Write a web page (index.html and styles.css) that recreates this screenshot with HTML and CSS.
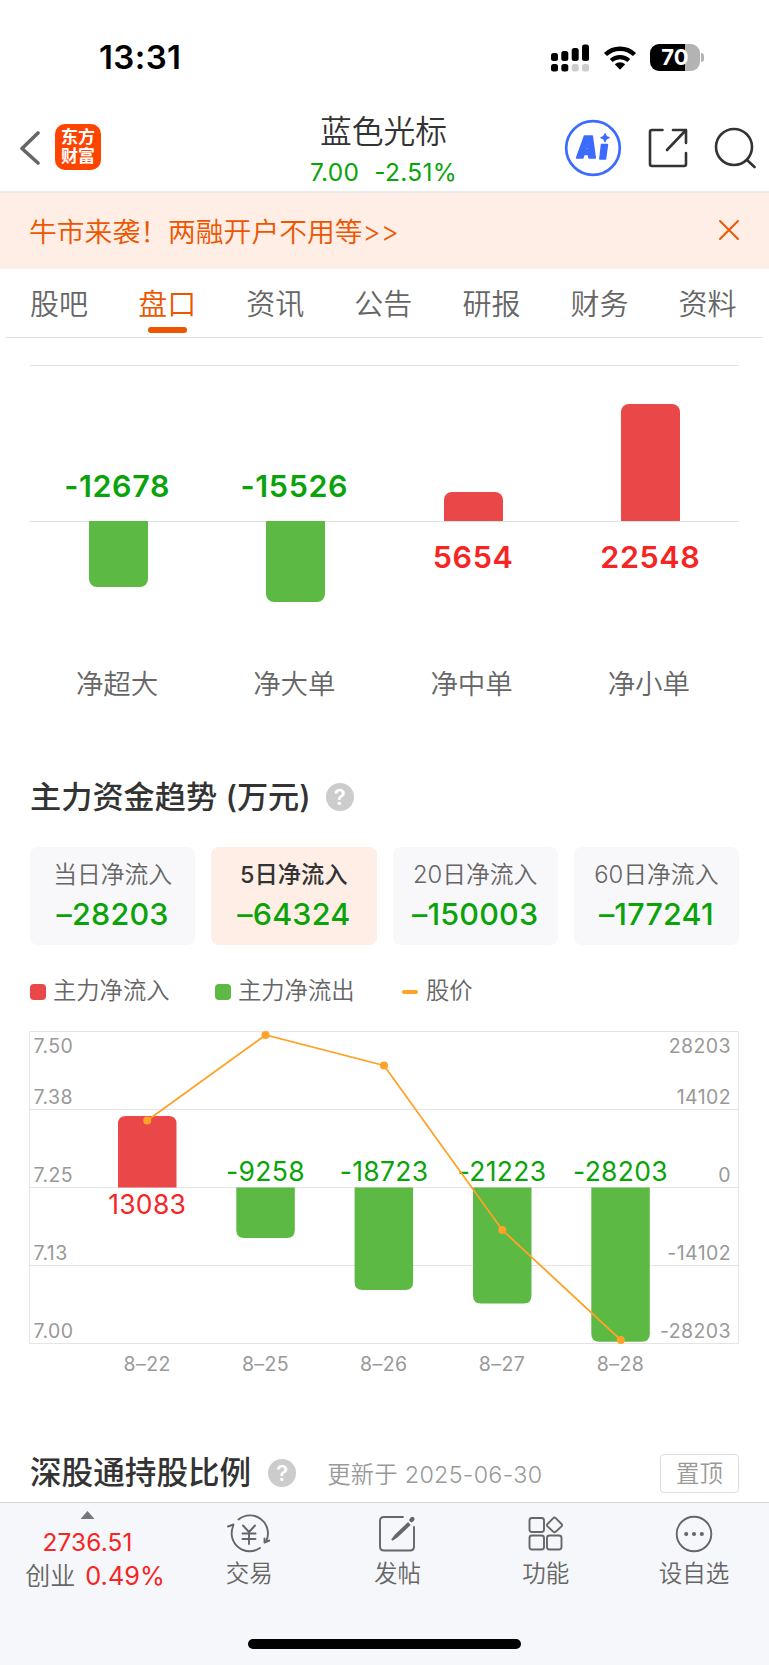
FILE: index.html
```html
<!DOCTYPE html>
<html lang="zh-CN">
<head>
  <meta charset="UTF-8">
  <title>蓝色光标</title>
  <link rel="stylesheet" href="styles.css">
</head>
<body>

  <div class="status-bar">
    <div class="time">13:31</div>
    <svg class="signal" width="38" height="28" viewBox="0 0 38 28">
      <rect x="0" y="9" width="7" height="8" rx="2.5"/>
      <rect x="10.3" y="7" width="7" height="10" rx="2.5"/>
      <rect x="20.7" y="4" width="7" height="13" rx="2.5"/>
      <rect x="31" y="0.5" width="7" height="16.5" rx="2.5"/>
      <rect x="0" y="20" width="7" height="7.5" rx="2.5"/>
      <rect x="10.3" y="20" width="7" height="7.5" rx="2.5"/>
      <rect x="20.7" y="20" width="7" height="7.5" rx="2.5" fill="#ccc"/>
      <rect x="31" y="20" width="7" height="7.5" rx="2.5" fill="#ccc"/>
    </svg>
    <svg class="wifi" width="34" height="26" viewBox="0 0 34 26">
      <path d="M2.5 9.5a21 21 0 0 1 29 0" fill="none" stroke="#000" stroke-width="4.4"/>
      <path d="M8.2 15.5a13 13 0 0 1 17.6 0" fill="none" stroke="#000" stroke-width="4.2"/>
      <path d="M11.8 19.2a8 8 0 0 1 10.4 0L17 24.8z"/>
    </svg>
    <div class="battery">70</div>
    <div class="battery-tip"></div>
  </div>

  <div class="header">
    <div class="header-left">
      <svg width="20" height="36" viewBox="0 0 20 36" fill="none" stroke="#666" stroke-width="3.6" stroke-linecap="round" stroke-linejoin="round">
        <path d="M18 3L2 18.5L18 33"/>
      </svg>
      <div class="logo">东方<br>财富</div>
    </div>
    <div class="stock">
      <div class="stock-name">蓝色光标</div>
      <div class="stock-price"><span>7.00</span><span>-2.51%</span></div>
    </div>
    <div class="header-right">
      <svg width="58" height="58" viewBox="0 0 58 58">
        <circle cx="29" cy="29" r="26.8" fill="none" stroke="#3b6bff" stroke-width="2.7"/>
        <g fill="#3b6bff" stroke="#3b6bff" stroke-width="1.5" stroke-linejoin="round">
          <path fill-rule="evenodd" d="M12.5 39L20.5 17H28.3L31.3 39H25L24.5 35.5H20L18.8 39ZM21.5 30.5H24.3L24 25Z"/>
          <path d="M37.5 25.5H43.5L41.5 40H35.8Z"/>
          <path d="M41 15L42.3 17.6L45 18.6L42.3 19.7L41 22.4L39.7 19.7L37 18.6L39.7 17.6Z"/>
        </g>
      </svg>
      <svg width="40" height="40" viewBox="0 0 40 40" fill="none" stroke="#333" stroke-width="2.6" stroke-linecap="round" stroke-linejoin="round">
        <path d="M14.5 2H4Q2 2 2 4V36Q2 38 4 38H36Q38 38 38 36V25"/>
        <path d="M25 2H38V15M38 2L19 22"/>
      </svg>
      <svg width="42" height="42" viewBox="0 0 42 42" fill="none" stroke="#333" stroke-width="2.6" stroke-linecap="round">
        <circle cx="20" cy="20" r="18"/>
        <path d="M33 33L40.5 40"/>
      </svg>
    </div>
  </div>

  <div class="notice">
    <span>牛市来袭！两融开户不用等&gt;&gt;</span>
    <svg width="20" height="20" viewBox="0 0 20 20" stroke="#ee5500" stroke-width="1.9" stroke-linecap="round">
      <path d="M1 1L19 19M19 1L1 19"/>
    </svg>
  </div>

  <div class="tabs">
    <div class="tab">股吧</div>
    <div class="tab active">盘口</div>
    <div class="tab">资讯</div>
    <div class="tab">公告</div>
    <div class="tab">研报</div>
    <div class="tab">财务</div>
    <div class="tab">资料</div>
  </div>

  <!-- 净单柱状图 -->
  <div class="order-chart">
    <div class="order-col">
      <div class="above"><span class="value green">-12678</span></div>
      <div class="below"><div class="bar bar-down" style="height: 66px"></div></div>
      <div class="order-name">净超大</div>
    </div>
    <div class="order-col">
      <div class="above"><span class="value green">-15526</span></div>
      <div class="below"><div class="bar bar-down" style="height: 81px"></div></div>
      <div class="order-name">净大单</div>
    </div>
    <div class="order-col">
      <div class="above"><div class="bar bar-up" style="height: 29px"></div></div>
      <div class="below"><span class="value red">5654</span></div>
      <div class="order-name">净中单</div>
    </div>
    <div class="order-col">
      <div class="above"><div class="bar bar-up" style="height: 117px"></div></div>
      <div class="below"><span class="value red">22548</span></div>
      <div class="order-name">净小单</div>
    </div>
  </div>

  <!-- 主力资金趋势 -->
  <div class="section-title trend-title">
    <h2>主力资金趋势 (万元)</h2>
    <span class="help">?</span>
  </div>

  <div class="cards">
    <div class="card">
      <div class="card-name">当日净流入</div>
      <div class="card-value">–28203</div>
    </div>
    <div class="card selected">
      <div class="card-name">5日净流入</div>
      <div class="card-value">–64324</div>
    </div>
    <div class="card">
      <div class="card-name">20日净流入</div>
      <div class="card-value">–150003</div>
    </div>
    <div class="card">
      <div class="card-name">60日净流入</div>
      <div class="card-value">–177241</div>
    </div>
  </div>

  <div class="legend">
    <div class="legend-item legend-in"><i class="dot dot-red"></i>主力净流入</div>
    <div class="legend-item legend-out"><i class="dot dot-green"></i>主力净流出</div>
    <div class="legend-item"><i class="dash"></i>股价</div>
  </div>

  <svg class="trend-chart" width="769" height="350" viewBox="0 1030 769 350">
    <g class="grid">
      <rect x="29.5" y="1031.5" width="709" height="312"/>
      <path d="M30 1109.5H739M30 1187.5H739M30 1265.5H739"/>
    </g>
    <path class="fill-red" d="M118 1187.5V1124Q118 1116 126 1116H168.5Q176.5 1116 176.5 1124V1187.5Z"/>
    <g class="fill-green">
      <path d="M236.3 1187.5V1230Q236.3 1238 244.3 1238H286.8Q294.8 1238 294.8 1230V1187.5Z"/>
      <path d="M354.6 1187.5V1282Q354.6 1290 362.6 1290H405.1Q413.1 1290 413.1 1282V1187.5Z"/>
      <path d="M473 1187.5V1295.5Q473 1303.5 481 1303.5H523.5Q531.5 1303.5 531.5 1295.5V1187.5Z"/>
      <path d="M591.3 1187.5V1333.8Q591.3 1341.8 599.3 1341.8H641.8Q649.8 1341.8 649.8 1333.8V1187.5Z"/>
    </g>
    <g class="axis">
      <text x="33.500" y="1052.500">7.50</text>
      <text x="33.500" y="1103.500">7.38</text>
      <text x="33.500" y="1181.500">7.25</text>
      <text x="33.500" y="1259.500">7.13</text>
      <text x="33.500" y="1337.500">7.00</text>
    </g>
    <g class="axis axis-right">
      <text x="731" y="1052.500">28203</text>
      <text x="731" y="1103.500">14102</text>
      <text x="731" y="1181.500">0</text>
      <text x="731" y="1259.500">-14102</text>
      <text x="731" y="1337.500">-28203</text>
    </g>
    <g class="bar-label">
      <text class="red" x="147.2" y="1213.5">13083</text>
      <text x="265.5" y="1181">-9258</text>
      <text x="384" y="1181">-18723</text>
      <text x="502" y="1181">-21223</text>
      <text x="620.5" y="1181">-28203</text>
    </g>
    <g class="axis axis-date">
      <text x="147.2" y="1370.5">8–22</text>
      <text x="265.5" y="1370.5">8–25</text>
      <text x="383.8" y="1370.5">8–26</text>
      <text x="502" y="1370.5">8–27</text>
      <text x="620.5" y="1370.5">8–28</text>
    </g>
    <polyline class="price-line" points="147.2,1120.5 265.5,1035 384,1065.5 502.3,1230 620.8,1340"/>
    <g class="price-dot">
      <circle cx="147.2" cy="1120.5" r="4"/>
      <circle cx="265.5" cy="1035" r="4"/>
      <circle cx="384" cy="1065.5" r="4"/>
      <circle cx="502.3" cy="1230" r="4"/>
      <circle cx="620.8" cy="1340" r="4"/>
    </g>
  </svg>

  <!-- 深股通持股比例 -->
  <div class="section-title holding-title">
    <h2>深股通持股比例</h2>
    <span class="help">?</span>
    <span class="update">更新于 2025-06-30</span>
    <span class="pin">置顶</span>
  </div>

  <div class="footer">
    <div class="nav">
      <div class="index">
        <div class="arrow"></div>
        <div class="index-value">2736.51</div>
        <div class="index-change">创业 <span>0.49%</span></div>
      </div>
      <div class="nav-item">
        <svg width="44" height="40" viewBox="0 0 44 40" fill="none" stroke="#666" stroke-width="1.9" stroke-linecap="round" stroke-linejoin="round">
          <path d="M11.5 5.5A18 18 0 0 1 39.5 26.500M37.500 24.500V28.500L42.300 26.500"/>
          <path d="M1 12.5L6.5 10.5L5.8 13A18 18 0 0 0 33 34"/>
          <path d="M16 11.5L22 18L28 11.5M22 18V30M15.5 19.5H28.5M15.5 25H28.5"/>
        </svg>
        <div>交易</div>
      </div>
      <div class="nav-item">
        <svg width="40" height="40" viewBox="0 0 40 40" fill="none" stroke="#666" stroke-width="1.9" stroke-linecap="round">
          <path d="M26 3H7Q3 3 3 7V32.5Q3 36.5 7 36.5H33Q37 36.5 37 32.5V13"/>
          <path d="M31 9.500L18.5 21.5L15 26L19.8 22.8L32.300 11Z" fill="#666" stroke-width="2"/>
          <path d="M34.5 6L35.300 5.200" stroke-width="4.5"/>
        </svg>
        <div>发帖</div>
      </div>
      <div class="nav-item">
        <svg width="40" height="40" viewBox="0 0 40 40" fill="none" stroke="#666" stroke-width="1.9" stroke-linejoin="round">
          <rect x="3.5" y="4" width="14.5" height="14" rx="2.5"/>
          <rect x="3.5" y="21.5" width="14.5" height="14" rx="2.5"/>
          <rect x="21" y="21.5" width="14.5" height="14" rx="2.5"/>
          <path d="M27.3 4.2Q28.5 3 29.7 4.2L35.5 10Q36.7 11.2 35.5 12.4L29.7 17.7Q28.5 18.9 27.3 17.7L21.5 12.4Q20.3 11.2 21.5 10Z"/>
        </svg>
        <div>功能</div>
      </div>
      <div class="nav-item">
        <svg width="40" height="40" viewBox="0 0 40 40" fill="#666">
          <circle cx="20" cy="20" r="17.3" fill="none" stroke="#666" stroke-width="1.9"/>
          <circle cx="12.2" cy="20" r="2.1"/>
          <circle cx="20" cy="20" r="2.1"/>
          <circle cx="27.8" cy="20" r="2.1"/>
        </svg>
        <div>设自选</div>
      </div>
    </div>
    <div class="home-indicator"></div>
  </div>

</body>
</html>
```

FILE: styles.css
```css
* {
  box-sizing: border-box;
}

body {
  margin: 0;
  width: 769px;
  height: 1665px;
  overflow: hidden;
  background: #fff;
  color: #666;
  font-family: Inter, "Noto Sans CJK SC", sans-serif;
  font-weight: 350;
}

svg {
  display: block;
  flex: none;
}

.green { color: #0aa30a; fill: #0aa30a; }
.red { color: #f72424; fill: #f72424; }

/* 状态栏 */
.status-bar {
  display: flex;
  align-items: center;
  height: 97px;
  padding: 18px 65px 0 99px;
}

.time {
  color: #000;
  font-size: 33px;
  font-weight: 600;
  line-height: 38px;
  letter-spacing: 0.4px;
  padding-bottom: 2px;
  margin-right: auto;
}

.signal { margin-right: 14px; }
.wifi { margin-right: 13px; }

.battery {
  width: 50px;
  height: 27px;
  border-radius: 9px;
  background: linear-gradient(to right, #000 70%, #b3b3b3 70%);
  color: #fff;
  font-size: 22px;
  font-weight: 700;
  line-height: 27px;
  text-align: center;
}

.battery-tip {
  width: 3px;
  height: 9px;
  margin-left: 1px;
  border-radius: 0 3px 3px 0;
  background: #b3b3b3;
}

/* 顶部标题 */
.header {
  display: grid;
  grid-template-columns: 1fr 200px 1fr;
  height: 96px;
  border-bottom: 2px solid #ebebee;
}

.header-left,
.header-right {
  display: flex;
  align-items: center;
  padding-top: 7px;
  height: 94px;
}

.header-left { padding-left: 20px; }

.logo {
  width: 46px;
  height: 46px;
  margin-left: 15px;
  padding-top: 4px;
  margin-top: -2px;
  border-radius: 10px;
  background: #ff4400;
  color: #fff;
  font-size: 17px;
  font-weight: 700;
  line-height: 19px;
  text-align: center;
}

.stock {
  text-align: center;
  padding: 13px 2px 0 0;
}

.stock-name {
  color: #333;
  font-size: 31.8px;
  line-height: 43px;
}

.stock-price {
  display: flex;
  justify-content: center;
  gap: 15px;
  color: #0aa30a;
  font-size: 24.5px;
  font-weight: 400;
  line-height: 38px;
  letter-spacing: 0.3px;
}

.header-right {
  justify-content: flex-end;
  padding-right: 13px;
}

.header-right svg + svg { margin-left: 26px; }

/* 通知条 */
.notice {
  display: flex;
  align-items: center;
  justify-content: space-between;
  height: 76px;
  padding: 0 30px 2px 29px;
  background: #feeee6;
  color: #ee5500;
  font-size: 27.8px;
}

/* 导航标签 */
.tabs {
  display: flex;
  height: 69px;
  margin: 0 6px;
  border-bottom: 1px solid #e2e2e2;
}

.tab {
  display: flex;
  flex-direction: column;
  align-items: center;
  width: 108.1px;
  padding: 13px 2px 0 0;
  font-size: 29px;
  line-height: 46px;
}

.active {
  color: #ee5500;
}

.active::after {
  content: "";
  width: 39px;
  height: 6px;
  margin: -1px 0 0 1px;
  border-radius: 3px;
  background: #ee5500;
}

/* 净单柱状图 */
.order-chart {
  display: grid;
  grid-template-columns: repeat(4, 1fr);
  margin: 27px 30px 0;
  border-top: 1px solid #e2e2e2;
}

.above,
.below {
  display: flex;
  justify-content: center;
  height: 156px;
}

.above {
  align-items: flex-end;
  border-bottom: 1px solid #dfe4e3;
}

.below { height: 140px; margin-top: -1px; }

.above .value { margin: 0 3px 17px 0; }
.below .value { margin-top: 18px; }

.value {
  font-size: 30.5px;
  font-weight: 600;
  line-height: 36px;
  letter-spacing: 0.6px;
}

.bar { width: 59px; }

.bar-up {
  border-radius: 8px 8px 0 0;
  background: #ea4749;
}

.bar-down {
  border-radius: 0 0 8px 8px;
  background: #5cb944;
}

.order-name {
  padding-right: 3px;
  font-size: 27.5px;
  line-height: 46px;
  text-align: center;
}

/* 标题 */
.section-title {
  display: flex;
  align-items: center;
  padding: 0 30px;
}

.section-title h2 {
  margin: 0;
  color: #333;
  font-size: 31.2px;
  font-weight: 500;
  line-height: 44px;
}

.trend-title { margin-top: 68px; }

.help {
  width: 28px;
  height: 28px;
  margin-left: 15px;
  border-radius: 50%;
  background: #ccc;
  color: #fff;
  font-size: 22px;
  font-weight: 600;
  line-height: 28px;
  text-align: center;
}

/* 净流入卡片 */
.cards {
  display: grid;
  grid-template-columns: repeat(4, 1fr);
  gap: 16px;
  margin: 28px 30px 0;
}

.card {
  height: 98px;
  padding-top: 9px;
  border-radius: 8px;
  background: #f8f8fb;
  text-align: center;
}

.card-name {
  font-size: 23.8px;
  line-height: 38px;
}

.card-value {
  color: #0aa30a;
  font-size: 30.5px;
  font-weight: 500;
  line-height: 40px;
  letter-spacing: 0.2px;
}

.selected { background: #feeee6; }

.selected .card-name {
  color: #333;
  font-size: 23.3px;
  font-weight: 500;
}

/* 图例 */
.legend {
  display: flex;
  height: 34px;
  margin: 30px 30px 0;
  font-size: 23.3px;
  line-height: 30px;
}

.legend-item {
  display: flex;
  align-items: center;
  height: 32px;
}

.legend-in { width: 185px; }
.legend-out { width: 187px; }

.dot {
  width: 16px;
  height: 16px;
  margin: 2px 7px 0 0;
  border-radius: 4px;
}

.dot-red { background: #ea4749; }
.dot-green { background: #5cb944; }

.dash {
  width: 16px;
  height: 4px;
  margin: 2px 8px 0 0;
  border-radius: 2px;
  background: #ffa228;
}

/* 趋势图 */
.trend-chart { margin-top: 21px; }

.grid {
  fill: none;
  stroke: #e5e5e5;
  stroke-width: 1;
}

.fill-red { fill: #ea4749; }
.fill-green { fill: #5cb944; }

.axis {
  fill: #999;
  font-size: 19.5px;
  font-weight: 400;
  letter-spacing: 0.4px;
}

.axis-right { text-anchor: end; }
.axis-date { text-anchor: middle; }

.bar-label {
  fill: #0aa30a;
  font-size: 26.5px;
  font-weight: 400;
  letter-spacing: 0.3px;
  text-anchor: middle;
}

.price-line {
  fill: none;
  stroke: #ffa228;
  stroke-width: 1.8;
}

.price-dot { fill: #ffa228; }

.holding-title {
  height: 40px;
  margin-top: 73px;
}

.holding-title h2 { font-size: 31.6px; }

.holding-title .help { margin-left: 17px; }

.update {
  margin-left: 31px;
  color: #999;
  font-size: 23.3px;
  letter-spacing: 0.3px;
  padding-bottom: 1px;
}

.pin {
  width: 79px;
  height: 39px;
  margin-left: auto;
  border: 1px solid #ddd;
  border-radius: 4px;
  color: #999;
  font-size: 23.5px;
  line-height: 37px;
  text-align: center;
}

/* 底部 */
.footer {
  height: 163px;
  margin-top: 9px;
  border-top: 1px solid #d0d5d9;
  background: #f6f7fa;
}

.nav {
  display: flex;
  height: 136px;
}

.index {
  width: 175px;
  padding-top: 8px;
  text-align: center;
}

.arrow {
  width: 14px;
  height: 8px;
  margin: 0 auto;
  background: #777;
  clip-path: polygon(50% 0, 100% 100%, 0 100%);
}

.index-value {
  padding-top: 5px;
  color: #f72424;
  font-size: 24.3px;
  font-weight: 400;
  line-height: 36px;
  letter-spacing: 0.2px;
}

.index-change {
  padding-left: 15px;
  font-size: 25px;
  line-height: 32px;
  white-space: nowrap;
}

.index-change span {
  margin-left: 3px;
  color: #f72424;
  font-size: 25.3px;
  font-weight: 400;
}

.nav-item {
  display: flex;
  flex-direction: column;
  align-items: center;
  width: 148.3px;
  padding-top: 11px;
  font-size: 23.5px;
  line-height: 40px;
}

.home-indicator {
  width: 273px;
  height: 10px;
  margin: 0 auto;
  border-radius: 5px;
  background: #000;
}
```
